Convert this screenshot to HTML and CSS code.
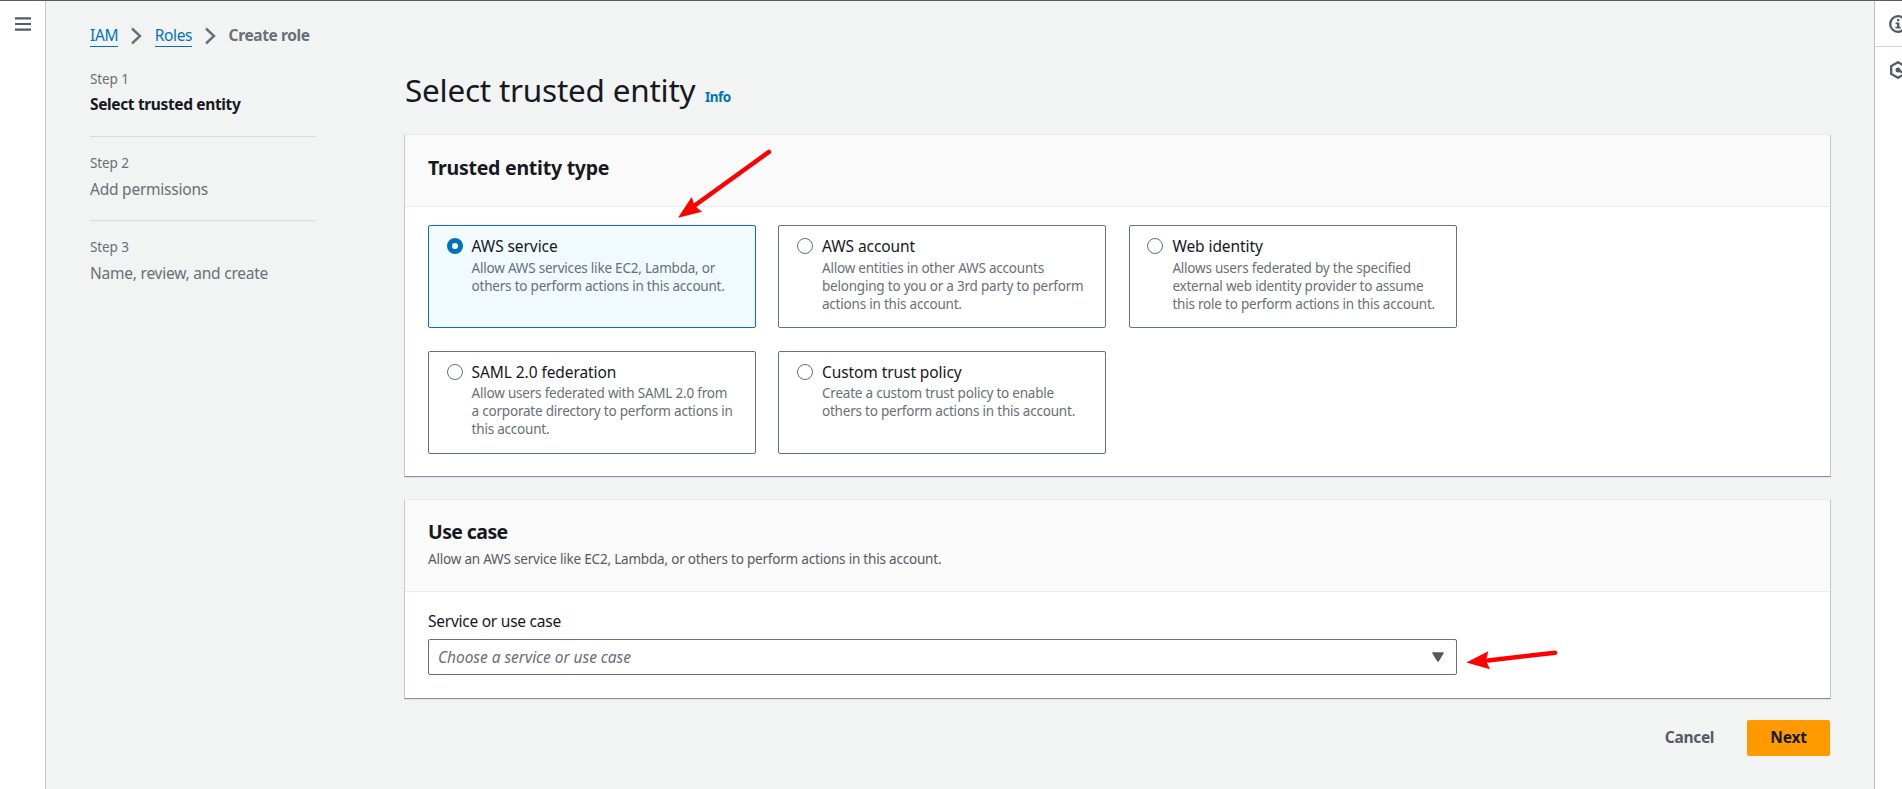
FILE: index.html
```html
<!DOCTYPE html>
<html lang="en">
<head>
<meta charset="utf-8">
<title>Create role</title>
<link rel="stylesheet" href="styles.css">
</head>
<body>
<div class="shell">
  <aside class="rail rail-left">
    <svg class="menu-icon" width="16" height="14" viewBox="0 0 16 14"><path d="M0 1.4h16M0 7h16M0 12.6h16" stroke="#545b64" stroke-width="2.2"/></svg>
  </aside>

  <div class="page">
    <nav class="breadcrumb">
      <a class="crumb">IAM</a>
      <svg class="chev" width="11" height="18" viewBox="0 0 11 18"><path d="M1 1.500l8 7.500-8 7.500" fill="none" stroke="#687078" stroke-width="2.4"/></svg>
      <a class="crumb">Roles</a>
      <svg class="chev" width="11" height="18" viewBox="0 0 11 18"><path d="M1 1.500l8 7.500-8 7.500" fill="none" stroke="#687078" stroke-width="2.4"/></svg>
      <span class="crumb-current">Create role</span>
    </nav>

    <div class="columns">
      <ol class="steps">
        <li class="step"><span class="step-no">Step 1</span><span class="step-name active">Select trusted entity</span></li>
        <li class="step"><span class="step-no">Step 2</span><span class="step-name">Add permissions</span></li>
        <li class="step"><span class="step-no">Step 3</span><span class="step-name">Name, review, and create</span></li>
      </ol>

      <main class="main">
        <div class="heading"><h1>Select trusted entity</h1><a class="info">Info</a></div>

        <section class="panel">
          <header class="panel-head"><h2 class="low">Trusted entity type</h2></header>
          <div class="cards">
            <label class="card selected"><span class="radio"></span><span class="card-text"><span class="card-title">AWS service</span><span class="card-desc">Allow AWS services like EC2, Lambda, or<br>others to perform actions in this account.</span></span></label>
            <label class="card"><span class="radio"></span><span class="card-text"><span class="card-title">AWS account</span><span class="card-desc">Allow entities in other AWS accounts<br>belonging to you or a 3rd party to perform<br>actions in this account.</span></span></label>
            <label class="card"><span class="radio"></span><span class="card-text"><span class="card-title">Web identity</span><span class="card-desc">Allows users federated by the specified<br>external web identity provider to assume<br>this role to perform actions in this account.</span></span></label>
            <label class="card tight"><span class="radio"></span><span class="card-text"><span class="card-title">SAML 2.0 federation</span><span class="card-desc">Allow users federated with SAML 2.0 from<br>a corporate directory to perform actions in<br>this account.</span></span></label>
            <label class="card tight"><span class="radio"></span><span class="card-text"><span class="card-title">Custom trust policy</span><span class="card-desc">Create a custom trust policy to enable<br>others to perform actions in this account.</span></span></label>
          </div>
        </section>

        <section class="panel panel-use">
          <header class="panel-head head-use"><h2 class="narrow">Use case</h2><p>Allow an AWS service like EC2, Lambda, or others to perform actions in this account.</p></header>
          <div class="field">
            <span class="field-label">Service or use case</span>
            <div class="select"><span class="placeholder">Choose a service or use case</span>
              <svg width="12" height="10" viewBox="0 0 12 10"><path d="M1 1h10L6 9z" fill="#545b64" stroke="#545b64" stroke-width="1.5" stroke-linejoin="round"/></svg>
            </div>
          </div>
        </section>

        <div class="actions"><button class="btn link">Cancel</button><button class="btn primary">Next</button></div>
      </main>
    </div>
  </div>

  <aside class="rail rail-right">
    <div class="tool tool-first"><svg width="18" height="18" viewBox="0 0 18 18"><circle cx="9" cy="9" r="7.800" fill="none" stroke="#545b64" stroke-width="2.3"/><path d="M8 4h2.400v2.200H8zM6.600 7.500h3.800v4.200h1.300v1.700H6.400v-1.700H8V9.200H6.600z" fill="#545b64"/></svg></div>
    <div class="tool"><svg width="18" height="18" viewBox="0 0 18 18"><path d="M9 1.200l6.800 3.900v7.800L9 16.800l-6.800-3.900V5.100z" fill="none" stroke="#545b64" stroke-width="2.3"/><circle cx="9" cy="9" r="2.500" fill="#545b64"/><path d="M9 9l7 4" stroke="#545b64" stroke-width="2.200"/></svg></div>
  </aside>
</div>

<svg class="arrow arrow-cards" width="100" height="74" viewBox="672 148 100 74"><path d="M768.800 152L694 206" stroke="#f00" stroke-width="4.600" stroke-linecap="round"/><path d="M678 217.800L691.700 197l2.800 8.800 7.500 5.900z" fill="#f00"/></svg>
<svg class="arrow arrow-select" width="98" height="26" viewBox="1462 647 98 26"><path d="M1555 652.700L1488 660.500" stroke="#f00" stroke-width="4.500" stroke-linecap="round"/><path d="M1466.300 662.500l22-11.200-2.300 9.400 4 8.500z" fill="#f00"/></svg>
</body>
</html>
```
FILE: styles.css
```css
* { box-sizing: border-box; }
body {
  margin: 0;
  height: 789px;
  position: relative;
  overflow: hidden;
  background: #f2f3f3;
  color: #16191f;
  font: 15.5px/24px "Noto Sans", sans-serif;
  letter-spacing: -0.23px;
}
h1, h2, p, ol { margin: 0; padding: 0; }
svg { display: block; flex: none; }

.shell { display: flex; height: 789px; border-top: 1px solid #545b64; }
.rail { flex: none; background: #fff; }
.rail-left { width: 46px; border-right: 1px solid #c2c6c8; padding: 16px 0 0 15px; }
.rail-right { width: 28px; border-left: 1px solid #bcc3c4; overflow: hidden; }
.tool { height: 46px; padding: 14px 0 0 14px; }
.tool-first { border-bottom: 1px solid #d0d6d6; }

.page { flex: 1; min-width: 0; padding: 22px 43px 0 44px; }
.breadcrumb { display: flex; align-items: center; height: 24px; }
.crumb { color: #0073bb; height: 23px; line-height: 23px; border-bottom: 1px solid #0073bb; letter-spacing: -0.35px; }
.chev { margin: 2px 13px 0 12.5px; }
.crumb-current { color: #687078; font-weight: 700; letter-spacing: -0.38px; }

.columns { display: flex; gap: 89px; }
.steps { width: 225px; flex: none; list-style: none; padding-top: 6px; }
.step { display: flex; flex-direction: column; gap: 3px; height: 84px; padding-top: 16px; border-bottom: 1px solid #d5dbdb; color: #687078; }
.step:last-child { border: 0; }
.step-no { font-size: 13.5px; line-height: 20px; letter-spacing: -0.1px; }
.step-name.active { color: #16191f; font-weight: 700; letter-spacing: -0.36px; }
.step:not(:first-child) { gap: 4px; }

.main { flex: 1; min-width: 0; padding-top: 23px; }
.heading { display: flex; align-items: baseline; gap: 9.5px; height: 64px; padding-left: 1px; }
h1 { font-size: 31.5px; line-height: 40px; font-weight: 400; letter-spacing: -0.24px; }
.info { color: #0073bb; font-size: 13.5px; font-weight: 700; letter-spacing: -0.5px; }

.panel { background: #fff; border: 1px solid #c3cbcb; border-top-color: #eaeded; border-bottom-color: #879596; height: 343px; box-shadow: 0 1px 0 #dfe3e3; }
.panel-use { height: 200px; margin-top: 22px; }
.panel-head { height: 72px; padding: 18px 23px 0; background: #fafafa; border-bottom: 1px solid #eaeded; }
.head-use { height: 92px; }
h2 { font-size: 19.5px; line-height: 28px; font-weight: 700; letter-spacing: -0.24px; }
h2.low { padding-top: 1px; }
h2.narrow { letter-spacing: -0.6px; }
.head-use p { margin-top: 3px; font-size: 13.5px; line-height: 20px; letter-spacing: -0.2px; color: #545b64; }

.cards { display: grid; grid-template-columns: repeat(3, 328px); gap: 23px 22.4px; padding: 18px 23px; }
.card { display: flex; gap: 9px; height: 103px; padding: 8px 0 0 17.6px; border: 1px solid #687078; border-radius: 2px; }
.card.selected { border-color: #0073bb; background: #f1faff; }
.radio { flex: none; width: 16px; height: 16px; margin-top: 4px; border: 1px solid #687078; border-radius: 50%; background: #fff; }
.selected .radio { border: 5px solid #0073bb; }
.card-text { display: flex; flex-direction: column; }
.card-title { letter-spacing: -0.08px; }
.card-desc { margin-top: 1px; font-size: 13.5px; line-height: 18px; letter-spacing: -0.21px; color: #687078; white-space: nowrap; }
.tight .card-desc { margin-top: 0; }

.field { width: 1075px; padding: 17px 23px 0; }
.field-label { display: block; letter-spacing: -0.25px; }
.select { display: flex; align-items: center; justify-content: space-between; width: 1029px; height: 36px; margin-top: 6px; padding: 0 12px 0 9px; border: 1px solid #687078; border-radius: 2px; }
.placeholder { color: #687078; font-style: italic; letter-spacing: -0.04px; }

.actions { display: flex; justify-content: flex-end; padding: 21px 1px 0 0; }
.btn { height: 36px; border: 0; border-radius: 2px; font: 700 15.5px/24px "Noto Sans", sans-serif; letter-spacing: -0.3px; }
.btn.link { width: 98px; margin-right: 9px; background: none; color: #545b64; padding: 0 0 2px 1px; }
.btn.primary { width: 83px; background: #ff9900; color: #16191f; padding: 0 0 2px; letter-spacing: -0.2px; }

.arrow { position: absolute; }
.arrow-cards { left: 672px; top: 148px; }
.arrow-select { left: 1462px; top: 647px; }
```
